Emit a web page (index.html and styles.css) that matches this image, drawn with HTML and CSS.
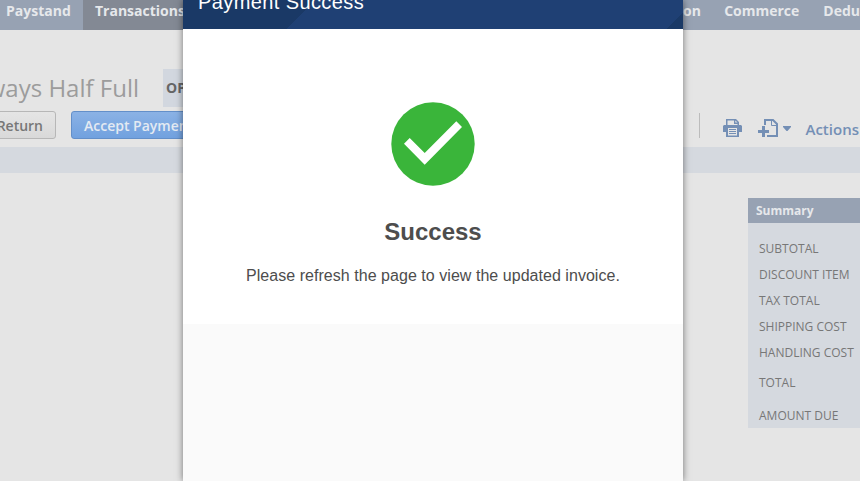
FILE: index.html
```
<!DOCTYPE html>
<html lang="en">
<head>
<meta charset="utf-8">
<title>Payment Success</title>
<link rel="stylesheet" href="styles.css">
</head>
<body>
<nav class="nav">
  <div class="nav-left">
    <span class="tab tab-paystand">Paystand</span>
    <span class="tab tab-active">Transactions</span>
  </div>
  <div class="nav-right">
    <span class="t-on">on</span>
    <span class="t-commerce">Commerce</span>
    <span class="t-dedu">Dedu</span>
  </div>
</nav>
<header class="heading">
  <h1 class="title">ways Half Full</h1>
  <span class="status">OPEN</span>
</header>
<div class="toolbar">
  <button class="btn btn-return">Return</button>
  <button class="btn btn-accept">Accept Payment</button>
  <div class="tools">
    <svg class="printer" width="19" height="18" viewBox="0 0 19 18">
      <path fill="#748fb5" fill-rule="evenodd" d="M3 0H13L16 3V6H18L19 7V13H16V18H3V13H0V7L1 6H3ZM4.5 1.5V6H14.5V5H11V1.5ZM12.3 1.5V3.6H14.5ZM5 9V16.5H14V9Z"/>
      <path fill="none" stroke="#748fb5" d="M6 10.5H13M6 12.5H13M6 14.5H13"/>
    </svg>
    <svg class="newdoc" width="20" height="18" viewBox="0 0 20 18">
      <path fill="none" stroke="#748fb5" stroke-width="2" d="M7 6V1H15L19 5V17H9"/>
      <path fill="none" stroke="#748fb5" d="M13.5 1V6.5H19"/>
      <path fill="#748fb5" d="M4 7H7V11H11V14H7V18H4V14H0V11H4Z"/>
    </svg>
    <svg class="caret" width="8" height="5" viewBox="0 0 8 5"><path fill="#748fb5" d="M0 0H8V1L4.5 5H3.5L0 1Z"/></svg>
    <span class="actions">Actions</span>
  </div>
</div>
<div class="band"></div>
<aside class="summary">
  <h2 class="summary-head">Summary</h2>
  <ul class="lines">
    <li>SUBTOTAL</li>
    <li>DISCOUNT ITEM</li>
    <li>TAX TOTAL</li>
    <li>SHIPPING COST</li>
    <li>HANDLING COST</li>
    <li class="total">TOTAL</li>
    <li class="due">AMOUNT DUE</li>
  </ul>
</aside>
<section class="modal">
  <header class="modal-head"><span class="modal-title">Payment Success</span></header>
  <div class="modal-body">
    <svg class="check" width="84" height="84" viewBox="0 0 84 84">
      <circle cx="42" cy="42" r="41.7" fill="#3ab53a"/>
      <path fill="#fff" d="M13 41.8L18.7 36L33.7 51L65.3 19.3L71 25L33.7 62.7Z"/>
    </svg>
    <h2 class="success">Success</h2>
    <p class="message">Please refresh the page to view the updated invoice.</p>
  </div>
</section>
</body>
</html>
```
FILE: styles.css
```
* { box-sizing: border-box; }
body {
  margin: 0;
  width: 860px;
  height: 481px;
  overflow: hidden;
  position: relative;
  background: #e5e5e5;
  font-family: "Open Sans", sans-serif;
  white-space: nowrap;
}
h1, h2, p, ul { margin: 0; padding: 0; font-weight: 400; }
.nav {
  display: flex;
  justify-content: space-between;
  height: 30px;
  background: #97a2b3;
  color: #e6e8eb;
  font-size: 14px;
  font-weight: 700;
  line-height: 22px;
}
.nav-left { display: flex; }
.tab-paystand { width: 83px; padding-left: 6px; }
.tab-active { width: 117px; padding-left: 12px; background: #838994; }
.nav-right { display: flex; width: 177px; }
.t-on { width: 41.5px; }
.t-commerce { width: 100px; }
.heading { display: flex; height: 38px; margin-top: 39px; }
.title { width: 163px; display: flex; justify-content: flex-end; padding-right: 24px; color: #9c9c9c; font-size: 24px; line-height: 38px; }
.status { width: 60px; padding-left: 3px; background: #d2d7df; color: #666; font-size: 14px; font-weight: 700; line-height: 38px; }
.toolbar { display: flex; height: 28px; margin-top: 4px; }
.btn {
  height: 28px;
  border: 1px solid #b7b7b7;
  border-radius: 3px;
  font: 600 14px/25px "Open Sans", sans-serif;
  padding: 1px 12px 0;
  margin: 0;
  white-space: nowrap;
}
.btn-return { width: 76px; margin-left: -20px; text-align: right; color: #777; background: linear-gradient(#e5e5e5, #d9d9d9); }
.btn-accept { width: 140px; margin-left: 15px; text-align: left; color: #e4eaf2; border-color: #638fc9; background: linear-gradient(#8bb2e5, #71a1df); }
.tools { display: flex; margin-left: 488px; height: 25px; margin-top: 2px; border-left: 1px solid #bcbcbc; color: #748fb5; }
.printer, .newdoc, .caret { flex: none; }
.printer { margin: 6px 0 0 23px; }
.newdoc { margin: 6px 0 0 16px; }
.caret { margin: 13px 0 0 5px; }
.actions { margin-left: 14.5px; font-size: 15px; font-weight: 600; line-height: 32px; }
.band { height: 26px; margin-top: 8px; background: #d5d9df; }
.summary { width: 112px; height: 230px; margin: 25px 0 0 748px; background: #d5d9df; }
.summary-head { height: 25px; padding-left: 8px; background: #97a2b3; color: #e6e8eb; font-size: 12px; font-weight: 700; line-height: 25px; }
.lines { list-style: none; padding: 13px 0 0 11px; color: #777; font-size: 12px; line-height: 26px; }
.total { margin-top: 4px; }
.due { margin-top: 7px; }
.modal {
  position: absolute;
  left: 183px;
  top: 0;
  width: 500px;
  height: 481px;
  background: #fafafa;
  box-shadow: 0 0 7px rgba(0, 0, 0, .5);
  font-family: "Liberation Sans", sans-serif;
}
.modal-head {
  height: 29px;
  padding-left: 15px;
  color: #fff;
  font-size: 20px;
  letter-spacing: .4px;
  line-height: 5px;
  background: linear-gradient(135deg, #1a3966 0 94px, #1f4074 94px 360px, #1f4074 360px calc(100% - 12px), #1a3966 calc(100% - 12px));
}
.modal-body { height: 295px; padding-top: 73px; display: flex; flex-direction: column; align-items: center; background: #fff; color: #4d4d4d; }
.check { flex: none; }
.success { margin-top: 31px; font-size: 24px; font-weight: 700; line-height: 30px; }
.message { margin-top: 19px; font-size: 16px; letter-spacing: .04px; line-height: 20px; }
```
